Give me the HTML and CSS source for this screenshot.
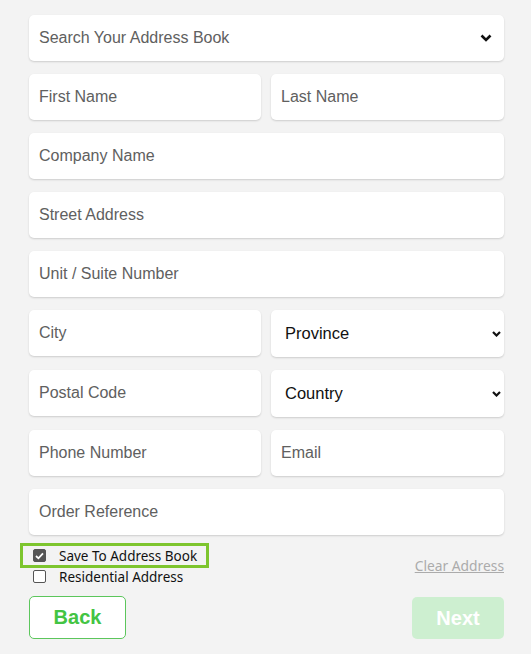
FILE: index.html
```html
<!DOCTYPE html>
<html>
<head>
<meta charset="utf-8">
<link rel="stylesheet" href="styles.css">
</head>
<body>
<form class="form">
  <div class="field select-field search">
    <span class="ph">Search Your Address Book</span>
    <svg class="chev" width="12" height="8" viewBox="0 0 12 8"><path d="M1.5 1.5 L6 6 L10.5 1.5" fill="none" stroke="#111" stroke-width="2.6"/></svg>
  </div>
  <div class="row">
    <div class="field"><span class="ph">First Name</span></div>
    <div class="field"><span class="ph">Last Name</span></div>
  </div>
  <div class="field"><span class="ph">Company Name</span></div>
  <div class="field"><span class="ph">Street Address</span></div>
  <div class="field"><span class="ph">Unit / Suite Number</span></div>
  <div class="row tall">
    <div class="field"><span class="ph">City</span></div>
    <div class="field select-field sel"><span class="val">Province</span>
      <svg class="chev small" width="9" height="6" viewBox="0 0 9 6"><path d="M1 1 L4.5 4.5 L8 1" fill="none" stroke="#111" stroke-width="2.2"/></svg>
    </div>
  </div>
  <div class="row tall">
    <div class="field"><span class="ph">Postal Code</span></div>
    <div class="field select-field sel"><span class="val">Country</span>
      <svg class="chev small" width="9" height="6" viewBox="0 0 9 6"><path d="M1 1 L4.5 4.5 L8 1" fill="none" stroke="#111" stroke-width="2.2"/></svg>
    </div>
  </div>
  <div class="row">
    <div class="field"><span class="ph">Phone Number</span></div>
    <div class="field"><span class="ph">Email</span></div>
  </div>
  <div class="field"><span class="ph">Order Reference</span></div>

  <div class="options">
    <div class="checks">
      <label class="check highlight"><span class="box checked"><svg width="9" height="8" viewBox="0 0 9 8"><path d="M1 4 L3.4 6.3 L8 1.3" fill="none" stroke="#fff" stroke-width="1.8"/></svg></span>Save To Address Book</label>
      <label class="check plain"><span class="box"></span>Residential Address</label>
    </div>
    <a class="clear">Clear Address</a>
  </div>

  <div class="buttons">
    <button type="button" class="btn back">Back</button>
    <button type="button" class="btn next">Next</button>
  </div>
</form>
</body>
</html>
```
FILE: styles.css
```css
html, body {
  margin: 0;
  padding: 0;
  background: #f3f3f3;
}
.form {
  width: 475px;
  margin: 0 0 0 29px;
  padding-top: 15px;
  display: flex;
  flex-direction: column;
  gap: 13px;
  font-family: "Liberation Sans", Arial, sans-serif;
}
.row {
  display: grid;
  grid-template-columns: 232px 233px;
  gap: 10px;
  align-items: start;
}
.row.tall .sel {
  height: 47px;
}
.field {
  height: 46px;
  box-sizing: border-box;
  background: #fff;
  border-radius: 5px;
  box-shadow: 0 1px 2px rgba(0, 0, 0, 0.16);
  display: flex;
  align-items: center;
  padding: 0 10px;
  font-size: 16px;
}
.ph {
  color: #606060;
}
.select-field {
  justify-content: space-between;
}
.search {
  padding-right: 12px;
}
.sel {
  padding: 0 3px 0 14px;
}
.val {
  color: #111;
  font-size: 16.5px;
}
.chev {
  display: block;
}
.options {
  display: flex;
  justify-content: space-between;
  align-items: center;
  margin-top: -5px;
  font-family: "Noto Sans", "Open Sans", sans-serif;
  font-size: 13.5px;
}
.checks {
  display: flex;
  flex-direction: column;
  margin-left: -9px;
}
.check {
  display: flex;
  align-items: center;
  color: #111;
  box-sizing: border-box;
}
.check.highlight {
  width: 189px;
  height: 25px;
  border: 3px solid #7dc52e;
  padding-left: 10px;
}
.check.plain {
  height: 17px;
  padding-left: 13px;
}
.box {
  width: 13px;
  height: 13px;
  box-sizing: border-box;
  border: 1px solid #555;
  border-radius: 2px;
  background: #fff;
  margin-right: 13px;
  display: flex;
  align-items: center;
  justify-content: center;
  flex: none;
}
.box.checked {
  background: #555;
  border-color: #555;
}
.box svg {
  display: block;
}
.clear {
  color: #ababab;
  text-decoration: underline;
  font-size: 13.8px;
  margin-top: 2px;
}
.buttons {
  display: flex;
  justify-content: space-between;
  align-items: flex-start;
  margin-top: -2px;
}
.btn {
  font-family: "Liberation Sans", Arial, sans-serif;
  font-weight: bold;
  font-size: 20px;
  border-radius: 5px;
  padding: 0;
  box-sizing: border-box;
}
.back {
  width: 97px;
  height: 43px;
  background: #fff;
  border: 1px solid #5cc65c;
  color: #43c443;
}
.next {
  width: 92px;
  height: 42px;
  margin-top: 1px;
  background: #cdefd0;
  border: none;
  color: #fff;
}
```
